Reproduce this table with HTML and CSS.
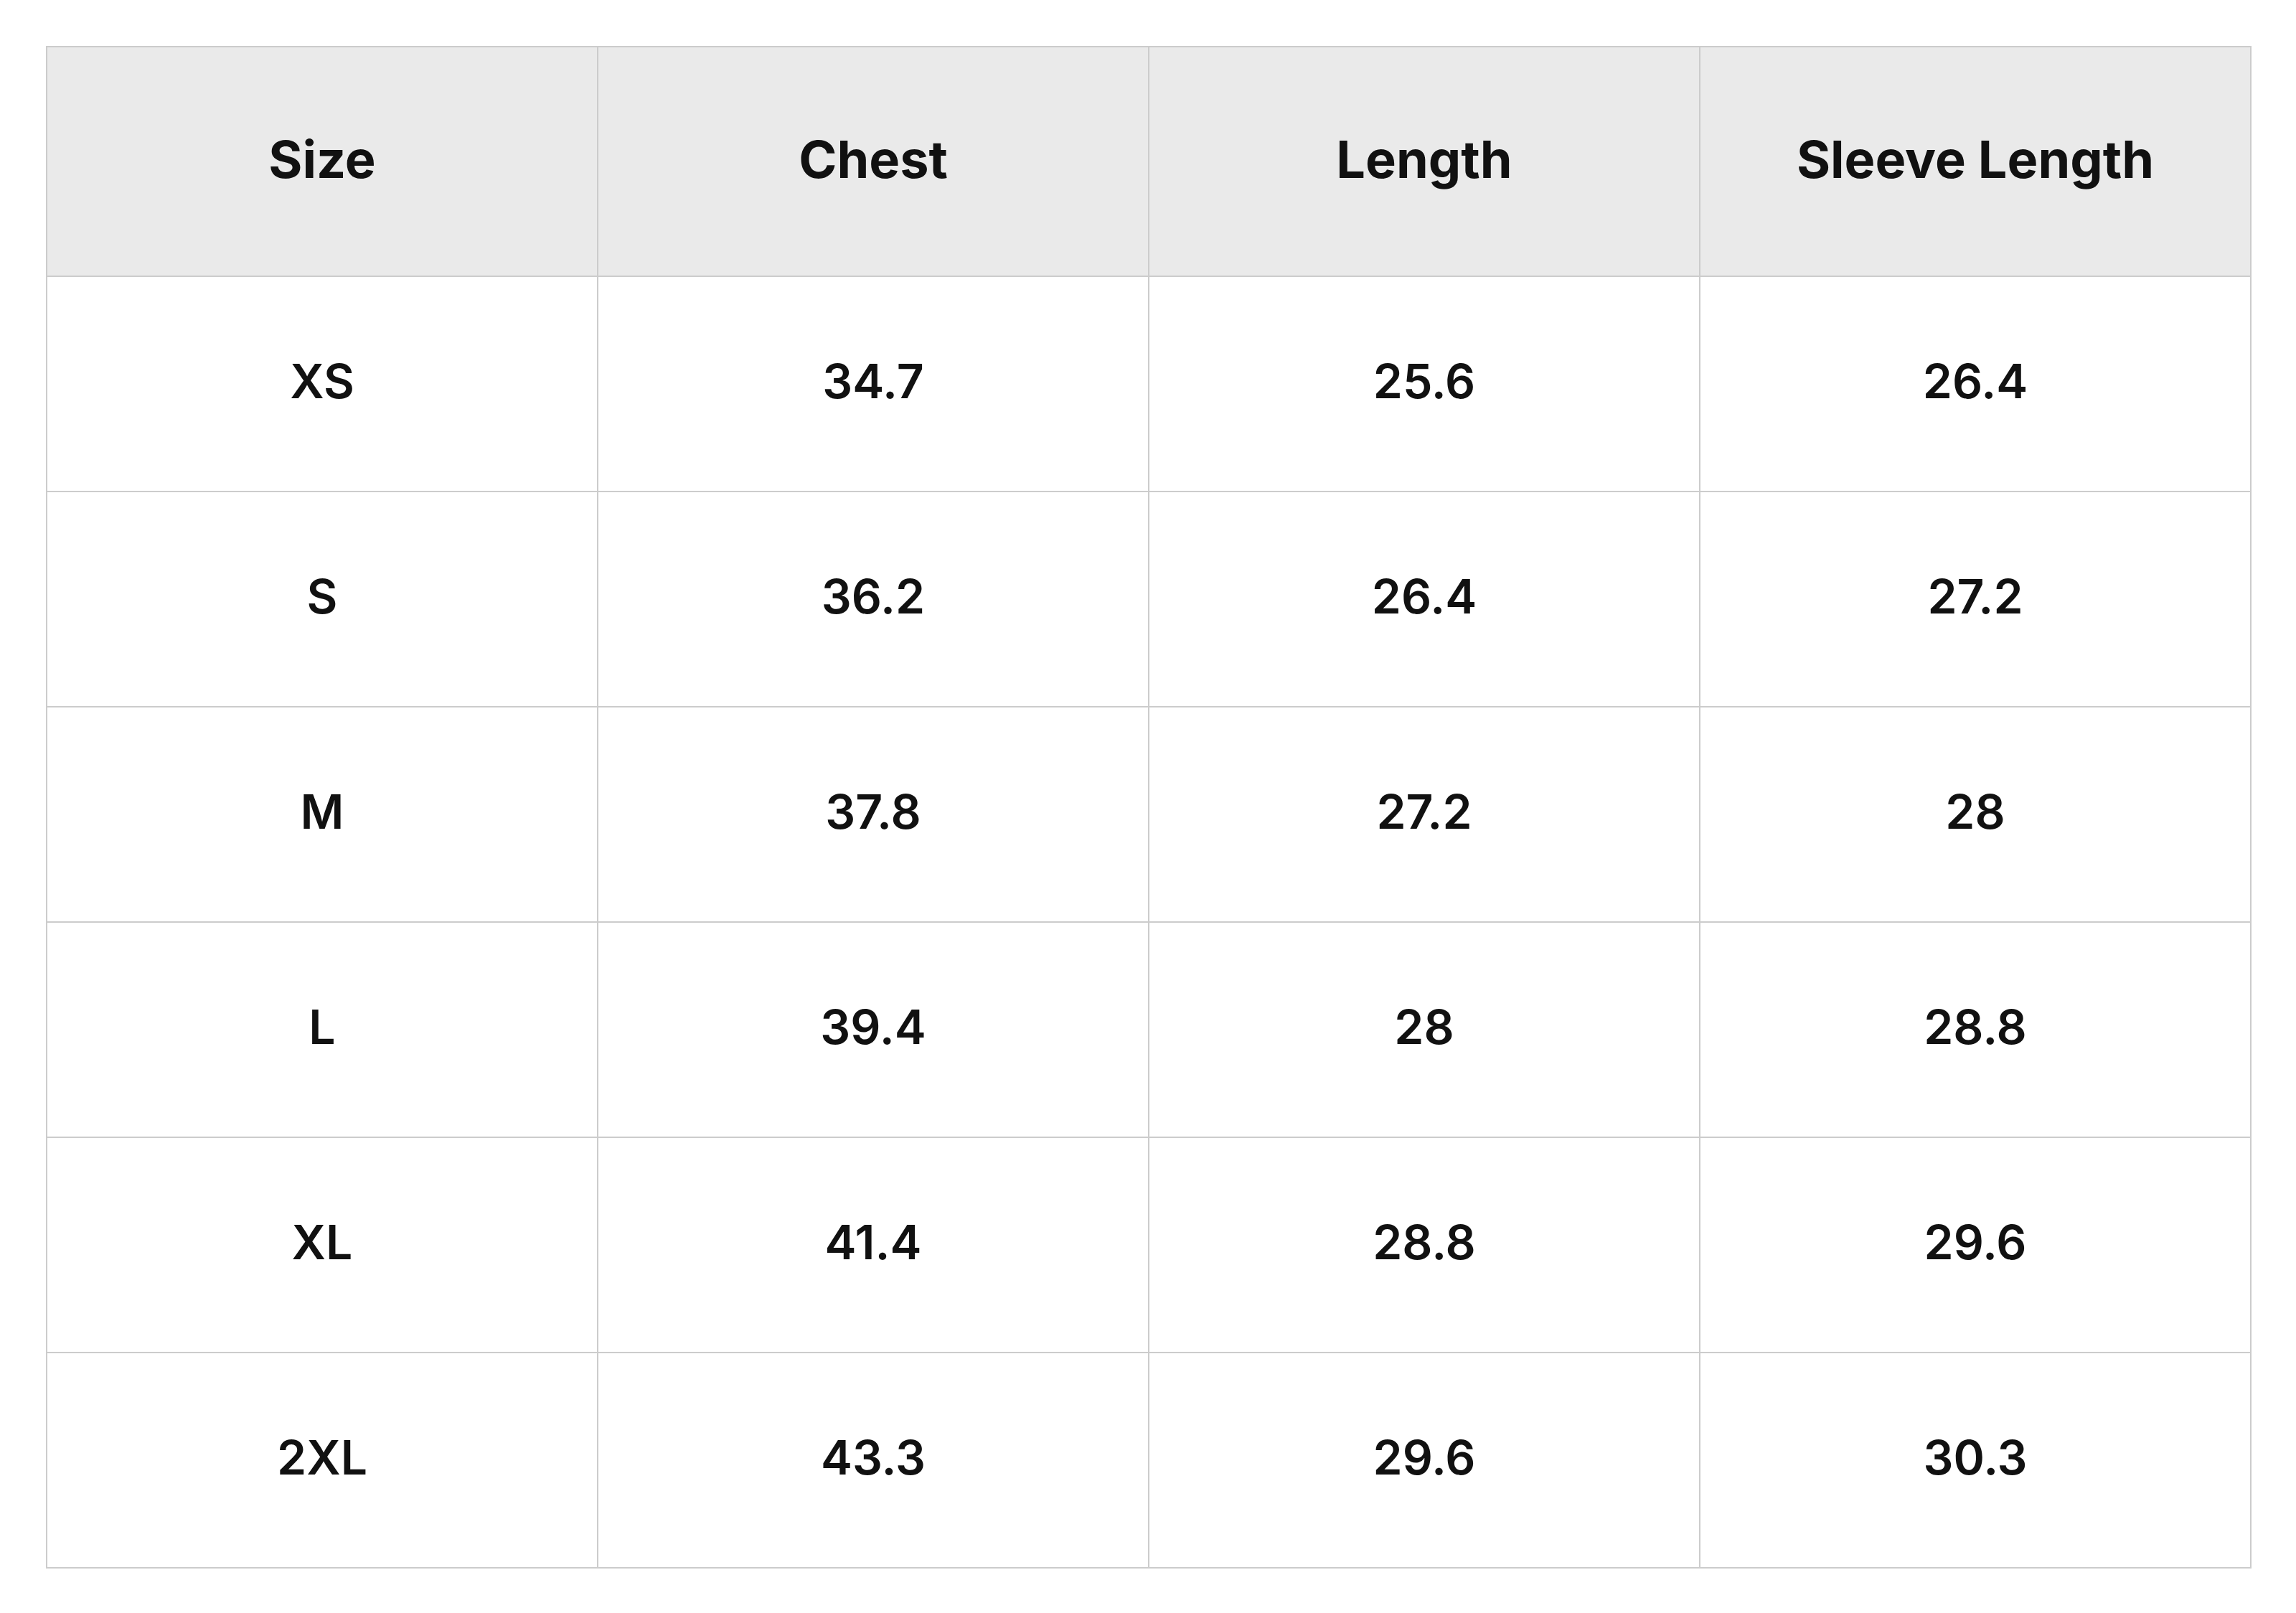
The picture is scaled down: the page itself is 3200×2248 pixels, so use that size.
FILE: index.html
```html
<!DOCTYPE html>
<html>
<head>
<meta charset="utf-8">
<link rel="stylesheet" href="styles.css">
</head>
<body>
<div class="wrap">
<table class="size-table">
<thead>
<tr><th>Size</th><th>Chest</th><th>Length</th><th>Sleeve Length</th></tr>
</thead>
<tbody>
<tr><td>XS</td><td>34.7</td><td>25.6</td><td>26.4</td></tr>
<tr><td>S</td><td>36.2</td><td>26.4</td><td>27.2</td></tr>
<tr><td>M</td><td>37.8</td><td>27.2</td><td>28</td></tr>
<tr><td>L</td><td>39.4</td><td>28</td><td>28.8</td></tr>
<tr><td>XL</td><td>41.4</td><td>28.8</td><td>29.6</td></tr>
<tr><td>2XL</td><td>43.3</td><td>29.6</td><td>30.3</td></tr>
</tbody>
</table>
</div>
</body>
</html>
```

FILE: styles.css
```css
html, body {
  margin: 0;
  padding: 0;
  background: #ffffff;
}
.wrap {
  padding: 64px 0 0 64px;
}
.size-table {
  width: 3074px;
  border-collapse: collapse;
  table-layout: fixed;
  font-family: Inter, "Noto Sans", sans-serif;
  color: #111111;
}
.size-table th,
.size-table td {
  border: 2px solid #cccccc;
  text-align: center;
  vertical-align: middle;
  padding: 0 0 8px 0;
}
.size-table th {
  background: #eaeaea;
  height: 310px;
  font-size: 72px;
  font-weight: 700;
}
.size-table td {
  height: 290px;
  font-size: 66px;
  font-weight: 600;
}
```
